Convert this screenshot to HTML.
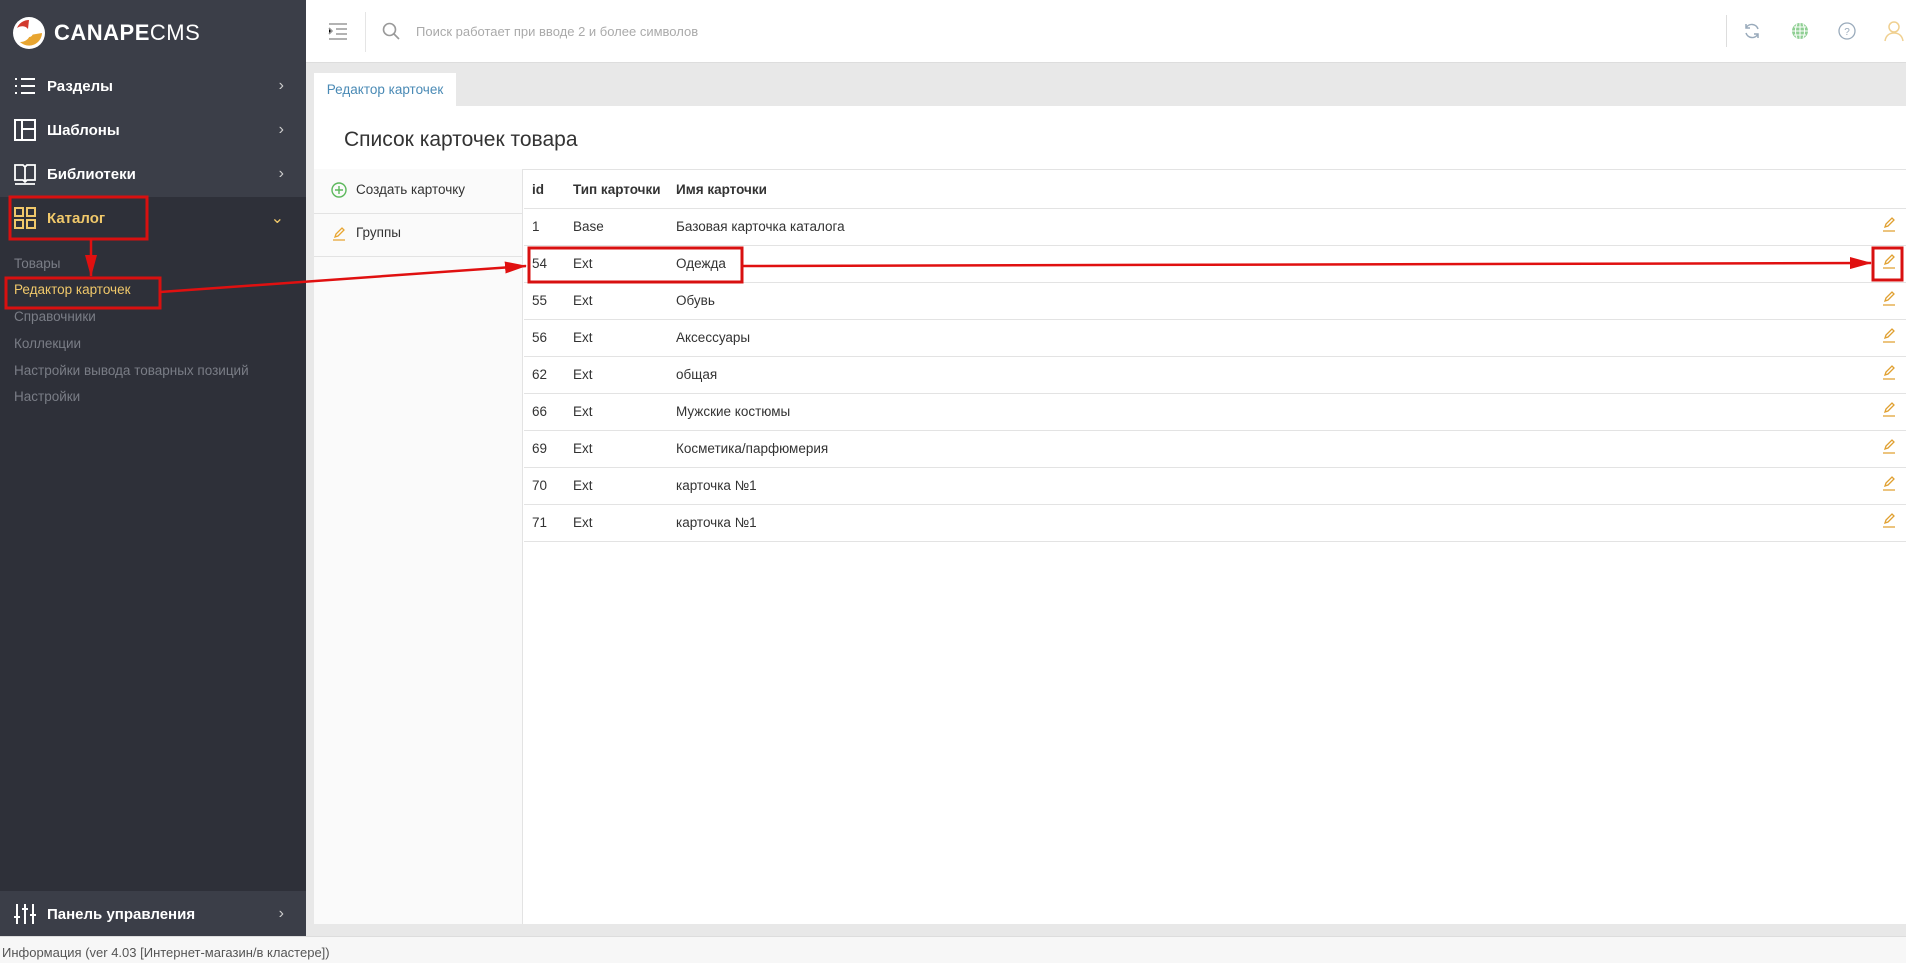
<!DOCTYPE html>
<html><head><meta charset="utf-8"><style>
*{box-sizing:border-box;margin:0;padding:0}
body{width:1906px;height:963px;position:relative;overflow:hidden;font-family:"Liberation Sans","Noto Sans CJK SC",sans-serif;background:#e8e8e8;color:#333}
.sb{position:absolute;left:0;top:0;width:306px;height:936px;background:#2e3039}
.sbtop{position:absolute;left:0;top:0;width:306px;height:197px;background:#3b3e48}
.logo{position:absolute;left:12px;top:16px;display:flex;align-items:center;color:#fff;font-size:22px;font-weight:bold;letter-spacing:0.5px}
.logo span{font-weight:normal}
.mi{position:absolute;left:0;width:306px;height:44px;display:flex;align-items:center;color:#fff;font-weight:bold;font-size:15px}
.mi .ic{width:24px;height:24px;margin-left:13px;margin-right:10px}
.mi .ch{position:absolute;right:22px;font-weight:normal;color:#ccc;font-size:16px}
.sub{position:absolute;left:14px;font-size:13.5px;color:#7a7d86}
.hdr{position:absolute;left:306px;top:0;width:1600px;height:63px;background:#fff;border-bottom:1px solid #ddd}
.tab{position:absolute;left:314px;top:73px;width:142px;height:33px;background:#fff;color:#4a8ab5;font-size:13.5px;line-height:34px;text-align:center}
.panel{position:absolute;left:314px;top:106px;width:1592px;height:818px;background:#fff}
.title{position:absolute;left:344px;top:128px;font-size:21px;color:#333}
.hl{position:absolute;height:1px;background:#e3e3e3}
.lp{position:absolute;left:314px;top:169px;width:209px;height:755px;background:#fafafa;border-right:1px solid #e3e3e3}
.t{position:absolute;font-size:13.5px;color:#333}
.th{font-weight:bold}
.ed{position:absolute;left:1881px}
.foot{position:absolute;left:0;top:936px;width:1906px;height:27px;background:#f7f7f7;border-top:1px solid #ddd;font-size:13px;color:#555;padding:8px 2px}
</style></head><body>
<div class="sb"></div><div class="sbtop"></div>
<div class="sb" style="top:891px;height:45px;background:#3b3e48"></div>
<div class="logo"><svg width="34" height="34" viewBox="0 0 34 34"><circle cx="17" cy="17" r="16" fill="#fff"/><path d="M17 4a13 13 0 0 0-12 8c4-3 9-2 11 1z" fill="#d23a2e"/><path d="M30 17a13 13 0 0 1-22 9c5 0 9-3 10-7z" fill="#e8a530"/><circle cx="17" cy="17" r="4" fill="#fff"/></svg><div style="margin-left:8px">CANAPE<span>CMS</span></div></div>

<div class="mi" style="top:64px"><svg class="ic" viewBox="0 0 24 24" stroke="#fff" stroke-width="2"><path d="M2 5h2M8 5h14M2 12h2M8 12h14M2 19h2M8 19h14"/></svg>Разделы<span class="ch">›</span></div>
<div class="mi" style="top:108px"><svg class="ic" viewBox="0 0 24 24" fill="none" stroke="#fff" stroke-width="2"><rect x="2" y="2" width="20" height="20"/><path d="M9 2v20M9 11h13"/></svg>Шаблоны<span class="ch">›</span></div>
<div class="mi" style="top:152px"><svg class="ic" viewBox="0 0 24 24" fill="none" stroke="#fff" stroke-width="1.8"><path d="M2 3h8l2 2 2-2h8v15h-8l-2 2-2-2H2zM12 5v15M2 22h20"/></svg>Библиотеки<span class="ch">›</span></div>
<div class="mi" style="top:196px;color:#f0c86a"><svg class="ic" viewBox="0 0 24 24" fill="none" stroke="#f0c86a" stroke-width="2"><rect x="2" y="2" width="8" height="8"/><rect x="14" y="2" width="8" height="8"/><rect x="2" y="14" width="8" height="8"/><rect x="14" y="14" width="8" height="8"/></svg>Каталог<span class="ch" style="color:#f0c86a">⌄</span></div>
<div class="sub" style="top:256px">Товары</div>
<div class="sub" style="top:282px;color:#f0c86a">Редактор карточек</div>
<div class="sub" style="top:309px">Справочники</div>
<div class="sub" style="top:336px">Коллекции</div>
<div class="sub" style="top:363px">Настройки вывода товарных позиций</div>
<div class="sub" style="top:389px">Настройки</div>
<div class="mi" style="top:892px"><svg class="ic" viewBox="0 0 24 24" stroke="#fff" stroke-width="2"><path d="M4 2v20M12 2v20M20 2v20M1 15h6M9 7h6M17 13h6"/></svg>Панель управления<span class="ch">›</span></div>

<div class="hdr">
<svg style="position:absolute;left:22px;top:22px" width="20" height="18" viewBox="0 0 20 18" stroke="#999" stroke-width="1.6"><path d="M1 2h18M8 7h11M8 12h11M1 17h18M1 6l3 3-3 3"/></svg>
<div style="position:absolute;left:59px;top:12px;width:1px;height:40px;background:#e5e5e5"></div>
<svg style="position:absolute;left:76px;top:22px" width="18" height="18" viewBox="0 0 18 18" fill="none" stroke="#999" stroke-width="1.6"><circle cx="7.5" cy="7.5" r="6"/><path d="M12 12l5 5"/></svg>
<div style="position:absolute;left:110px;top:24px;font-size:13px;color:#aaa">Поиск работает при вводе 2 и более символов</div>
<div style="position:absolute;left:1420px;top:15px;width:1px;height:32px;background:#ddd"></div>
<svg style="position:absolute;left:1437px;top:22px" width="18" height="18" viewBox="0 0 18 18" fill="none" stroke="#9ab" stroke-width="1.5"><path d="M15 7A6.5 6.5 0 0 0 3 6M3 11a6.5 6.5 0 0 0 12 1M3 2v4h4M15 16v-4h-4"/></svg>
<svg style="position:absolute;left:1485px;top:22px" width="18" height="18" viewBox="0 0 18 18" fill="#8fcf93" stroke="#fff" stroke-width="1"><circle cx="9" cy="9" r="8" stroke="none"/><path d="M1 9h16M9 1v16M3 5h12M3 13h12M6 2c-2 4-2 10 0 14M12 2c2 4 2 10 0 14" fill="none"/></svg>
<svg style="position:absolute;left:1532px;top:22px" width="18" height="18" viewBox="0 0 18 18" fill="none" stroke="#9ab" stroke-width="1.3"><circle cx="9" cy="9" r="8"/><text x="9" y="13" font-size="10" text-anchor="middle" fill="#9ab" stroke="none" font-family="Liberation Sans">?</text></svg>
<svg style="position:absolute;left:1578px;top:20px" width="20" height="22" viewBox="0 0 20 22" fill="none" stroke="#f0d090" stroke-width="1.5"><circle cx="10" cy="7" r="5"/><path d="M1 21c1-6 5-8 9-8s8 2 9 8"/></svg>
</div>

<div class="tab">Редактор карточек</div>
<div class="panel"></div>
<div class="title">Список карточек товара</div>
<div class="hl" style="left:314px;top:169px;width:1592px"></div>
<div class="lp"></div>
<div class="hl" style="left:314px;top:213px;width:209px"></div>
<div class="hl" style="left:314px;top:256px;width:209px"></div>
<svg style="position:absolute;left:331px;top:182px" width="16" height="16" viewBox="0 0 16 16" fill="none" stroke="#5cb85c" stroke-width="1.4"><circle cx="8" cy="8" r="7"/><path d="M8 4v8M4 8h8"/></svg>
<div class="t" style="left:356px;top:182px">Создать карточку</div>
<svg style="position:absolute;left:331px;top:225px" width="16" height="16" viewBox="0 0 16 16" fill="none" stroke="#e8a530" stroke-width="1.3"><path d="M4 12l1-3 6-6 2 2-6 6zM2 15h12"/></svg>
<div class="t" style="left:356px;top:225px">Группы</div>

<div class="t th" style="left:532px;top:182px">id</div>
<div class="t th" style="left:573px;top:182px">Тип карточки</div>
<div class="t th" style="left:676px;top:182px">Имя карточки</div>
<div class="hl" style="left:524px;top:208px;width:1382px"></div>

<div id="rows"></div>
<script>
var d=[["1","Base","Базовая карточка каталога"],["54","Ext","Одежда"],["55","Ext","Обувь"],["56","Ext","Аксессуары"],["62","Ext","общая"],["66","Ext","Мужские костюмы"],["69","Ext","Косметика/парфюмерия"],["70","Ext","карточка №1"],["71","Ext","карточка №1"]];
var h="";d.forEach(function(r,i){var y=219+i*37;
h+='<div class="t" style="left:532px;top:'+y+'px">'+r[0]+'</div><div class="t" style="left:573px;top:'+y+'px">'+r[1]+'</div><div class="t" style="left:676px;top:'+y+'px">'+r[2]+'</div>';
h+='<svg class="ed" style="top:'+(y-4)+'px" width="16" height="18" viewBox="0 0 16 18" fill="none" stroke="#e0a030" stroke-width="1.3"><path d="M4 12l1-3 6-6 2 2-6 6zM2 16h12"/></svg>';
h+='<div class="hl" style="left:524px;top:'+(245+i*37)+'px;width:1382px"></div>';});
document.getElementById("rows").innerHTML=h;
</script>

<svg style="position:absolute;left:0;top:0" width="1906" height="963">
<defs><marker id="b" markerWidth="22" markerHeight="12" refX="21" refY="6" orient="auto" markerUnits="userSpaceOnUse"><path d="M0 0L22 6L0 12z" fill="#e01010"/></marker></defs>
<g fill="none" stroke="#d81010" stroke-width="3">
<rect x="10" y="197" width="137" height="42"/>
<rect x="6" y="278" width="154" height="30"/>
<rect x="529" y="248" width="213" height="34"/>
<rect x="1873" y="248" width="29" height="32"/>
</g>
<g stroke="#e01010" stroke-width="2.5">
<line x1="91" y1="239" x2="91" y2="276" marker-end="url(#b)"/>
<line x1="160" y1="292" x2="526" y2="266" marker-end="url(#b)"/>
<line x1="742" y1="266" x2="1871" y2="263" marker-end="url(#b)"/>
</g></svg>

<div class="foot">Информация (ver 4.03 [Интернет-магазин/в кластере])</div>
</body></html>
